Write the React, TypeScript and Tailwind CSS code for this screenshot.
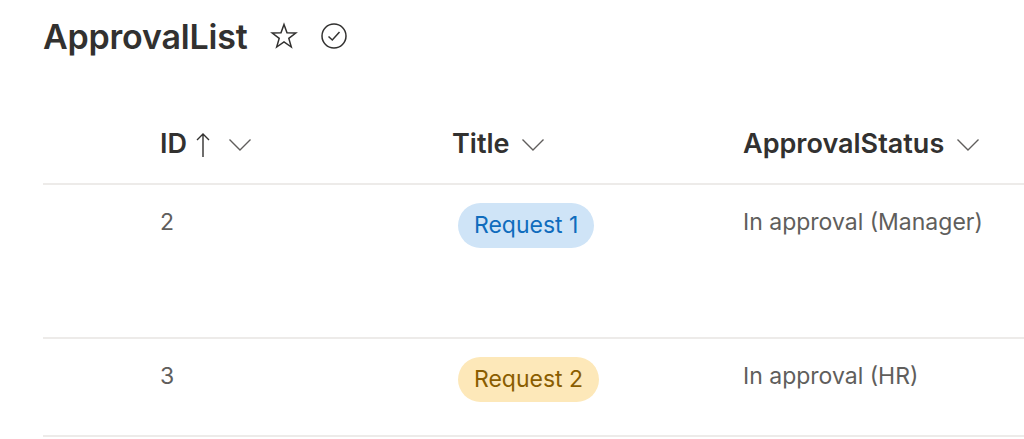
const rows = [
  { id: 2, title: 'Request 1', tone: 'blue', status: 'In approval (Manager)', height: 'h-[154px]' },
  { id: 3, title: 'Request 2', tone: 'yellow', status: 'In approval (HR)', height: 'h-[98px]' },
];

function Chevron() {
  return (
    <svg width="24" height="14" viewBox="0 0 24 14" fill="none" stroke="#605e5c" strokeWidth="1.4">
      <path d="M1.5 1.5 L12 12 L22.5 1.5" />
    </svg>
  );
}

export default function App() {
  return (
    <div className="w-[1024px] h-[439px] overflow-hidden bg-white text-[#323130]" style={{ fontFamily: 'Inter, "Noto Sans", sans-serif' }}>
      <div className="flex items-center pl-[43px] pt-[14px] h-[58px]">
        <h1 className="text-[34px] font-semibold tracking-[-0.2px]">ApprovalList</h1>
        <svg className="ml-[22px]" width="28" height="28" viewBox="0 0 28 28" fill="none" stroke="#323130" strokeWidth="1.5" strokeLinejoin="miter">
          <path d="M14 2.5 L17 10.8 L25.8 11 L18.8 16.4 L21.3 25 L14 20 L6.7 25 L9.2 16.4 L2.2 11 L11 10.8 Z" />
        </svg>
        <svg className="ml-[22px]" width="28" height="28" viewBox="0 0 28 28" fill="none" stroke="#323130" strokeWidth="1.5">
          <circle cx="14" cy="14" r="12" />
          <path d="M8.5 14.5 L12.3 18 L19.5 10" />
        </svg>
      </div>

      <div className="ml-[43px] mt-[42px]">
        <div className="flex items-center h-[85px] pl-[117px] border-b-2 border-[#edebe9] pt-[6px]">
          <div className="w-[292px] flex items-center">
            <span className="text-[27px] font-semibold">ID</span>
            <svg className="ml-[9px]" width="14" height="26" viewBox="0 0 14 26" fill="none" stroke="#323130" strokeWidth="1.4">
              <path d="M7 25 V2 M1 8 L7 2 L13 8" />
            </svg>
            <span className="ml-[18px]"><Chevron /></span>
          </div>
          <div className="w-[291px] flex items-center">
            <span className="text-[27px] font-semibold">Title</span>
            <span className="ml-[11px]"><Chevron /></span>
          </div>
          <div className="flex items-center">
            <span className="text-[27px] font-semibold">ApprovalStatus</span>
            <span className="ml-[12px]"><Chevron /></span>
          </div>
        </div>

        {rows.map((r) => (
          <div key={r.id} className={`flex items-start pl-[117px] border-b-2 border-[#edebe9] ${r.height}`}>
            <div className="w-[292px] pt-[20px] text-[23px] text-[#605e5c]">{r.id}</div>
            <div className="w-[291px] pt-[18px] pl-[6px]">
              <span
                className={`inline-flex items-center h-[45px] px-[16px] rounded-full text-[23px] ${
                  r.tone === 'blue' ? 'bg-[#cfe4f7] text-[#0f6cbd]' : 'bg-[#fde8b9] text-[#8a5d00]'
                }`}
              >
                {r.title}
              </span>
            </div>
            <div className="pt-[20px] text-[23px] text-[#605e5c]">{r.status}</div>
          </div>
        ))}
      </div>
    </div>
  );
}
